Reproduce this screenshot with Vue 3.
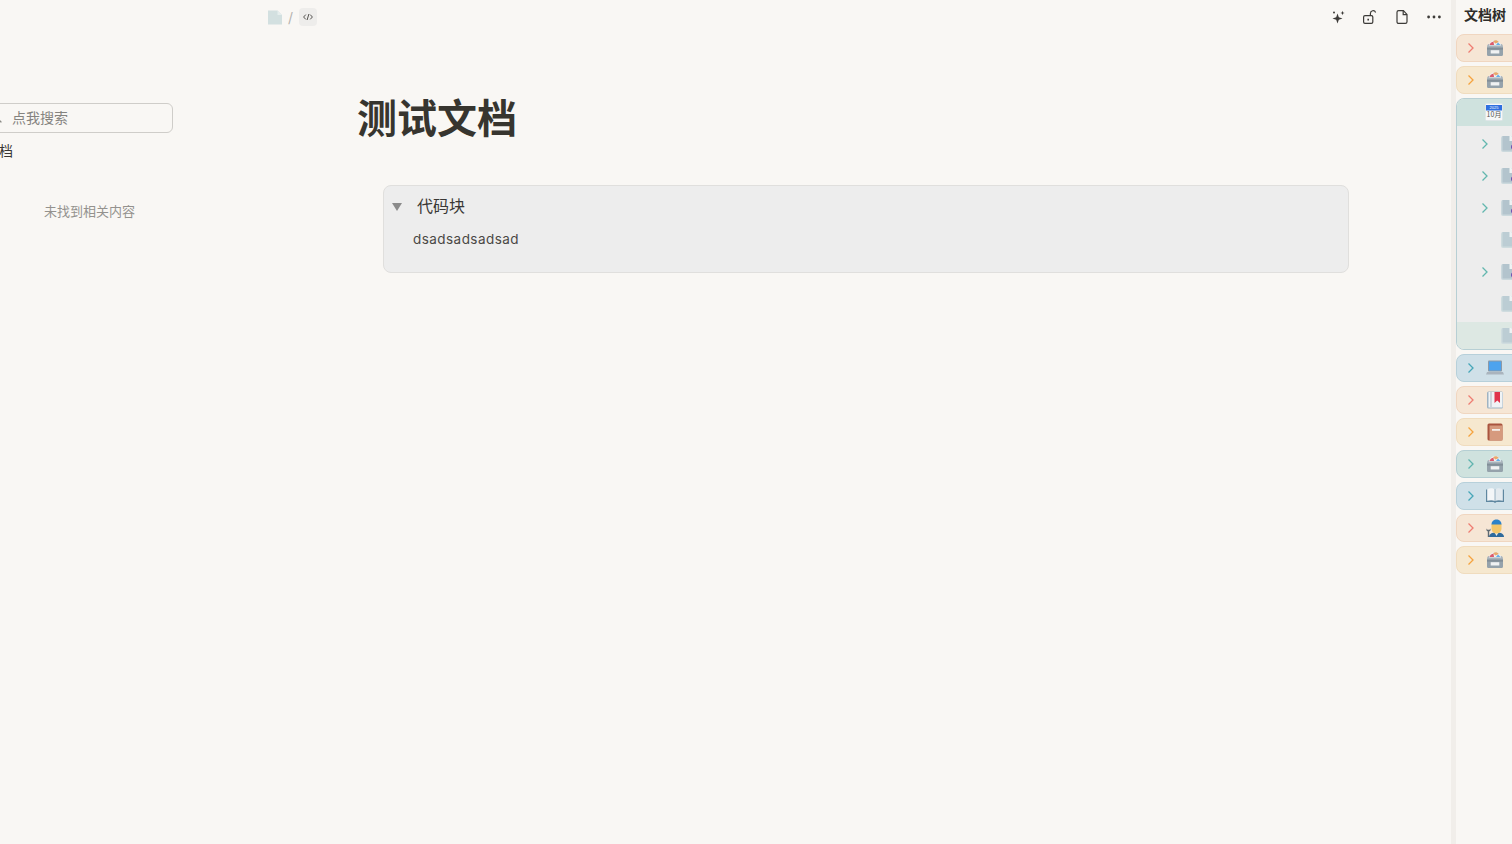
<template>
  <div class="page">
    <aside class="search-side">
      <div class="search-inner">
        <div class="search-box">
          <svg class="search-icon" width="14" height="14" viewBox="0 0 14 14" fill="none" stroke="#8a8a86" stroke-width="1.3">
            <circle cx="6" cy="6" r="4.2" />
            <path d="M9.2 9.2 12.4 12.4" />
          </svg>
          <span>点我搜索</span>
        </div>
        <div class="scope">文档</div>
        <p class="empty">未找到相关内容</p>
      </div>
    </aside>

    <main class="main">
      <header class="topbar">
        <nav class="crumbs">
          <svg class="crumb-doc" width="14" height="15" viewBox="0 0 14 15">
            <path d="M0 .5h9.500L14 5v9.500H0z" fill="#d3e0e0" />
            <path d="M9.500 .5 14 5H9.500z" fill="#e6eeed" />
          </svg>
          <span class="slash">/</span>
          <span class="code-tag">
            <svg width="10" height="10" viewBox="0 0 10 10" fill="none" stroke="#55534f" stroke-width="1">
              <path d="M2.800 2.600.6 5l2.200 2.400M7.200 2.600 9.400 5 7.200 7.400M5.900 2 4.100 8" />
            </svg>
          </span>
        </nav>
        <div class="actions">
          <button type="button">
            <svg width="16" height="16" viewBox="0 0 16 16" fill="#3d3b38">
              <path d="M7.500 4.500 8.800 8.200 12.500 9.500 8.800 10.800 7.500 14.500 6.200 10.800 2.500 9.500 6.200 8.200z" />
              <path d="M12.500 1.800 13.100 3.400 14.600 4 13.100 4.600 12.500 6.200 11.900 4.600 10.400 4 11.900 3.400z" />
              <circle cx="4" cy="3.500" r="1" />
            </svg>
          </button>
          <button type="button">
            <svg width="16" height="16" viewBox="0 0 16 16" fill="none" stroke="#3d3b38" stroke-width="1.2">
              <rect x="1.600" y="6.600" width="9.200" height="7.800" rx="1.400" />
              <path d="M8.400 6.400V4.400a2.700 2.700 0 0 1 5.200-1" />
              <path d="M6.200 9.800v1.800" stroke-width="1.600" />
            </svg>
          </button>
          <button type="button">
            <svg width="16" height="16" viewBox="0 0 16 16" fill="none" stroke="#3d3b38" stroke-width="1.200">
              <path d="M3 3.200C3 2.200 3.700 1.600 4.600 1.600H9.400L13 5.400V12.800C13 13.800 12.300 14.400 11.400 14.400H4.600C3.700 14.400 3 13.800 3 12.800z" />
              <path d="M9.200 1.800V5.600H13" />
            </svg>
          </button>
          <button type="button">
            <svg width="16" height="16" viewBox="0 0 16 16" fill="#3d3b38">
              <circle cx="2.600" cy="8" r="1.400" />
              <circle cx="8" cy="8" r="1.400" />
              <circle cx="13.400" cy="8" r="1.400" />
            </svg>
          </button>
        </div>
      </header>

      <article class="doc">
        <h1>测试文档</h1>
        <section class="code-block">
          <div class="summary">
            <span class="triangle"></span>
            <span>代码块</span>
          </div>
          <pre>dsadsadsadsad</pre>
        </section>
      </article>
    </main>

    <aside class="tree-side">
      <div class="tree-title">文档树</div>
      <div class="tree">
        <template v-for="item in tree" :key="item.id">
          <div v-if="item.children" :class="['group', item.tone]">
            <div class="row head">
              <span class="chevron-slot"></span>
              <TreeIcon :name="item.icon" />
            </div>
            <div
              v-for="child in item.children"
              :key="child.id"
              :class="['row', 'child', { selected: child.selected }]"
            >
              <svg v-if="child.arrow" class="chevron" width="8" height="12" viewBox="0 0 8 12">
                <path d="M1.500 1.500 6 6l-4.500 4.500" />
              </svg>
              <span v-else class="chevron-slot"></span>
              <TreeIcon :name="child.icon" />
            </div>
          </div>
          <div v-else :class="['row', 'single', item.tone]">
            <svg class="chevron" width="8" height="12" viewBox="0 0 8 12">
              <path d="M1.500 1.500 6 6l-4.500 4.500" />
            </svg>
            <TreeIcon :name="item.icon" />
          </div>
        </template>
      </div>
    </aside>
  </div>
</template>

<script setup>
import { h } from 'vue'

const tree = [
  { id: 1, tone: 'red', icon: 'cabinet' },
  { id: 2, tone: 'orange', icon: 'cabinet' },
  {
    id: 3,
    tone: 'green',
    icon: 'calendar',
    children: [
      { id: 31, icon: 'docDot', arrow: true },
      { id: 32, icon: 'docDot', arrow: true },
      { id: 33, icon: 'docDot', arrow: true },
      { id: 34, icon: 'doc' },
      { id: 35, icon: 'docDot', arrow: true },
      { id: 36, icon: 'doc' },
      { id: 37, icon: 'doc', selected: true },
    ],
  },
  { id: 4, tone: 'blue', icon: 'laptop' },
  { id: 5, tone: 'red', icon: 'bookmark' },
  { id: 6, tone: 'orange', icon: 'redbook' },
  { id: 7, tone: 'green-flat', icon: 'cabinet' },
  { id: 8, tone: 'blue', icon: 'openbook' },
  { id: 9, tone: 'red', icon: 'worker' },
  { id: 10, tone: 'orange', icon: 'cabinet' },
]

const s = (tag, props, kids) => h(tag, props, kids)

const shapes = {
  cabinet: () => [
    s('path', { d: 'M1 9C1 6.500 1.500 5 3 5H15C16.500 5 17 6.500 17 9z', fill: '#a7b2ba' }),
    s('path', { d: 'M2.800 6.500C3.500 3 6.500 1 9 1s5.500 2 6.200 5.500z', fill: '#eceff2' }),
    s('path', { d: 'M3.500 6C4 4 5.500 3 7.500 2.800L8 6z', fill: '#dc5a6c' }),
    s('path', { d: 'M7 2.200C9 .8 11.500 1.200 12.800 3L9.500 4.500z', fill: '#eba96a' }),
    s('path', { d: 'M10 6 12 3.500 14.500 6z', fill: '#63aee8' }),
    s('path', { d: 'M1 8H17V15.500C17 16.500 16.200 17 15.200 17H2.800C1.800 17 1 16.500 1 15.500z', fill: '#95a2ab' }),
    s('rect', { x: 1, y: 9.400, width: 16, height: 1, fill: '#76828c' }),
    s('rect', { x: 4.700, y: 11.200, width: 8.600, height: 3.300, fill: '#f0f2f3' }),
  ],
  calendar: () => [
    s('rect', { x: 0, y: 0, width: 18, height: 18, rx: 2, fill: '#dfe6e8' }),
    s('rect', { x: 1, y: 1, width: 16, height: 16, fill: '#f7f8f8' }),
    s('rect', { x: 1, y: 2, width: 16, height: 5.500, fill: '#2f6fe0' }),
    s('text', { x: 9, y: 6.200, 'font-size': 4, 'text-anchor': 'middle', fill: '#fff', 'font-family': 'Liberation Sans, sans-serif' }, '2025'),
    s('text', { x: 9, y: 14.200, 'font-size': 7, 'text-anchor': 'middle', fill: '#555', 'font-family': 'Noto Sans CJK SC, sans-serif' }, '10月'),
  ],
  doc: () => [
    s('rect', { x: 0, y: 1, width: 18, height: 16, rx: 2, fill: '#cfdcdf' }),
    s('path', { d: 'M1.500 1H10L16.500 6V15.500H1.500z', fill: '#bccdd4' }),
    s('path', { d: 'M8.500 1H10.500L13 3.500V6H8.500z', fill: '#eef3f4' }),
  ],
  docDot: () => [
    s('rect', { x: 0, y: 1, width: 18, height: 16, rx: 2, fill: '#cbd9dd' }),
    s('path', { d: 'M1.500 1H10L16.500 6V15.500H1.500z', fill: '#b3c4cd' }),
    s('path', { d: 'M8.500 1H10.500L13 3.500V6H8.500z', fill: '#eef3f4' }),
    s('circle', { cx: 12.500, cy: 12, r: 2.500, fill: '#6a4bb0' }),
  ],
  laptop: () => [
    s('rect', { x: 2, y: 1.500, width: 14, height: 11, rx: 1, fill: '#8d99a6' }),
    s('rect', { x: 3, y: 2.500, width: 12, height: 9, fill: '#4da3ee' }),
    s('path', { d: 'M1 13H17L18 15.500H0z', fill: '#aab4bd' }),
  ],
  bookmark: () => [
    s('rect', { x: 1, y: 0.500, width: 16, height: 17, rx: 1.500, fill: '#9fb3c2' }),
    s('rect', { x: 2.500, y: 1, width: 14, height: 15.500, fill: '#f0f3f5' }),
    s('rect', { x: 4, y: 1, width: 2, height: 15.500, fill: '#cdd6dc' }),
    s('path', { d: 'M8.500 1H14V12L11.250 9.500 8.500 12z', fill: '#e0344c' }),
  ],
  redbook: () => [
    s('rect', { x: 1.500, y: 0.500, width: 15, height: 17, rx: 1.500, fill: '#a9543f' }),
    s('rect', { x: 3.500, y: 2.500, width: 13, height: 15, fill: '#d69a7e' }),
    s('rect', { x: 6, y: 6, width: 8, height: 1.800, fill: '#f5efe9' }),
  ],
  openbook: () => [
    s('path', { d: 'M0 2.500H18V15H10.500L9 16 7.500 15H0z', fill: '#5f87a0' }),
    s('path', { d: 'M1.200 2.200C4 1 7 1 8.700 2.500V14C7 13 4 13 1.200 13.800z', fill: '#f3f6f8' }),
    s('path', { d: 'M16.800 2.200C14 1 11 1 9.300 2.500V14C11 13 14 13 16.800 13.800z', fill: '#e3eaef' }),
  ],
  worker: () => [
    s('path', { d: 'M3 18C3 14.800 6 13.500 10.500 13.500S18 14.800 18 18z', fill: '#2f6a9c' }),
    s('path', { d: 'M8.500 13.500H12.500L10.500 17z', fill: '#e8edf0' }),
    s('path', { d: 'M5.500 5H15.500V9.500C15.500 12.500 13 14.500 10.500 14.500S5.500 12.500 5.500 9.500z', fill: '#f4c66a' }),
    s('path', { d: 'M5.500 5.500C5.500 2 8 .5 10.500 .5S15.500 2 15.500 5.500z', fill: '#2d82c8' }),
    s('path', { d: 'M.5 9.500V11.500L1.800 12.500V18H3.200V12.500L4.500 11.500V9.500L3.500 10.800H1.500z', fill: '#5f6a72' }),
  ],
}

const TreeIcon = (props) =>
  h('svg', { class: 'tree-icon', width: 18, height: 18, viewBox: '0 0 18 18' }, shapes[props.name]())
TreeIcon.props = ['name']
</script>

<style>
html,
body {
  margin: 0;
  background: #f9f7f4;
  overflow: hidden;
}
</style>

<style scoped>
.page {
  display: flex;
  height: 844px;
  overflow: hidden;
  background: #f9f7f4;
  color: #3a3835;
  font-family: "Inter", "Noto Sans CJK SC", sans-serif;
}

.search-side {
  flex: 0 0 255px;
  overflow: hidden;
}

.search-inner {
  width: 193px;
  margin-left: -20px;
  padding-top: 103px;
}

.search-box {
  display: flex;
  align-items: center;
  gap: 9px;
  padding: 0 0 2px 8px;
  height: 26px;
  border: 1px solid #cfcdc9;
  border-radius: 6px;
  font-size: 14px;
  color: #85837f;
}

.search-icon {
  flex: none;
}

.scope {
  margin-top: 8px;
  padding-left: 5px;
  height: 20px;
  line-height: 20px;
  font-size: 14px;
}

.empty {
  margin: 40px 0 0;
  padding-left: 26px;
  text-align: center;
  font-size: 13px;
  line-height: 20px;
  color: #94928e;
}

.main {
  flex: 1;
  min-width: 0;
}

.topbar {
  display: flex;
  align-items: center;
  justify-content: space-between;
  height: 34px;
  padding: 0 5px 0 13px;
}

.crumbs {
  display: flex;
  align-items: center;
}

.slash {
  margin: 0 6px 0 6px;
  font-size: 14px;
  color: #b5b3af;
}

.code-tag {
  display: flex;
  align-items: center;
  justify-content: center;
  width: 18px;
  height: 18px;
  border-radius: 4px;
  background: #eeedeb;
}

.actions {
  display: flex;
  gap: 8px;
}

.actions button {
  display: flex;
  align-items: center;
  justify-content: center;
  width: 24px;
  height: 24px;
  padding: 0;
  border: 0;
  background: none;
}

.doc {
  padding: 0 102px;
}

.doc h1 {
  margin: 61px 0 0;
  height: 48px;
  font-size: 40px;
  line-height: 48px;
  font-weight: 700;
  color: #37352f;
}

.code-block {
  height: 86px;
  margin: 42px 0 0 26px;
  border: 1px solid #e0dfdd;
  border-radius: 8px;
  background: #ededed;
}

.summary {
  display: flex;
  align-items: center;
  gap: 15px;
  height: 20px;
  padding: 10px 0 0 8px;
  font-size: 16px;
  line-height: 20px;
}

.triangle {
  width: 0;
  height: 0;
  margin-top: 2px;
  border-style: solid;
  border-width: 8px 5px 0;
  border-color: #8b8b8b transparent transparent;
}

.code-block pre {
  margin: 13px 0 0 29px;
  font-family: "Inter", "Noto Sans", sans-serif;
  font-size: 13.5px;
  line-height: 20px;
  letter-spacing: 0.45px;
  color: #4a4845;
}

.tree-side {
  flex: 0 0 61px;
  box-sizing: border-box;
  height: 100%;
  border-left: 5px solid #f1eeea;
  overflow: hidden;
}

.tree-title {
  height: 34px;
  padding-left: 8px;
  font-size: 14px;
  line-height: 29px;
  font-weight: 700;
  white-space: nowrap;
  color: #2f2d2a;
}

.tree {
  display: flex;
  flex-direction: column;
  gap: 4px;
  width: 260px;
}

.row {
  display: flex;
  align-items: center;
  box-sizing: border-box;
  height: 28px;
  padding-left: 10px;
}

.single {
  border: 1px solid;
  border-radius: 8px;
}

.chevron {
  flex: none;
  width: 8px;
  height: 12px;
  fill: none;
  stroke: currentColor;
  stroke-width: 1.3;
}

.chevron-slot {
  flex: none;
  width: 8px;
}

.tree-icon {
  flex: none;
  margin-left: 11px;
}

.red {
  color: #ee7d72;
  background: #f6e6d5;
  border-color: #f0d6c0;
}

.orange {
  color: #f5a33e;
  background: #f6e8cf;
  border-color: #f0dcbe;
}

.blue {
  color: #46a6b8;
  background: #cfe0e8;
  border-color: #b7d0da;
}

.green-flat {
  color: #5fb3ae;
  background: #cfe2de;
  border-color: #b5cfd3;
}

.group {
  border: 1px solid #b7cfd4;
  border-radius: 8px;
  background: #ededed;
  overflow: hidden;
}

.group .head {
  height: 27px;
  margin-bottom: 4px;
  padding-left: 9px;
  padding-bottom: 1px;
  background: #cfe2de;
  border-radius: 0 0 8px 0;
}

.child {
  height: 28px;
  margin-top: 4px;
  padding-left: 24px;
  color: #62b7ae;
}

.group .head + .child {
  margin-top: 0;
}

.child .tree-icon {
  margin-left: 12px;
}

.child.selected {
  height: 27px;
  background: #dde8e3;
}
</style>
